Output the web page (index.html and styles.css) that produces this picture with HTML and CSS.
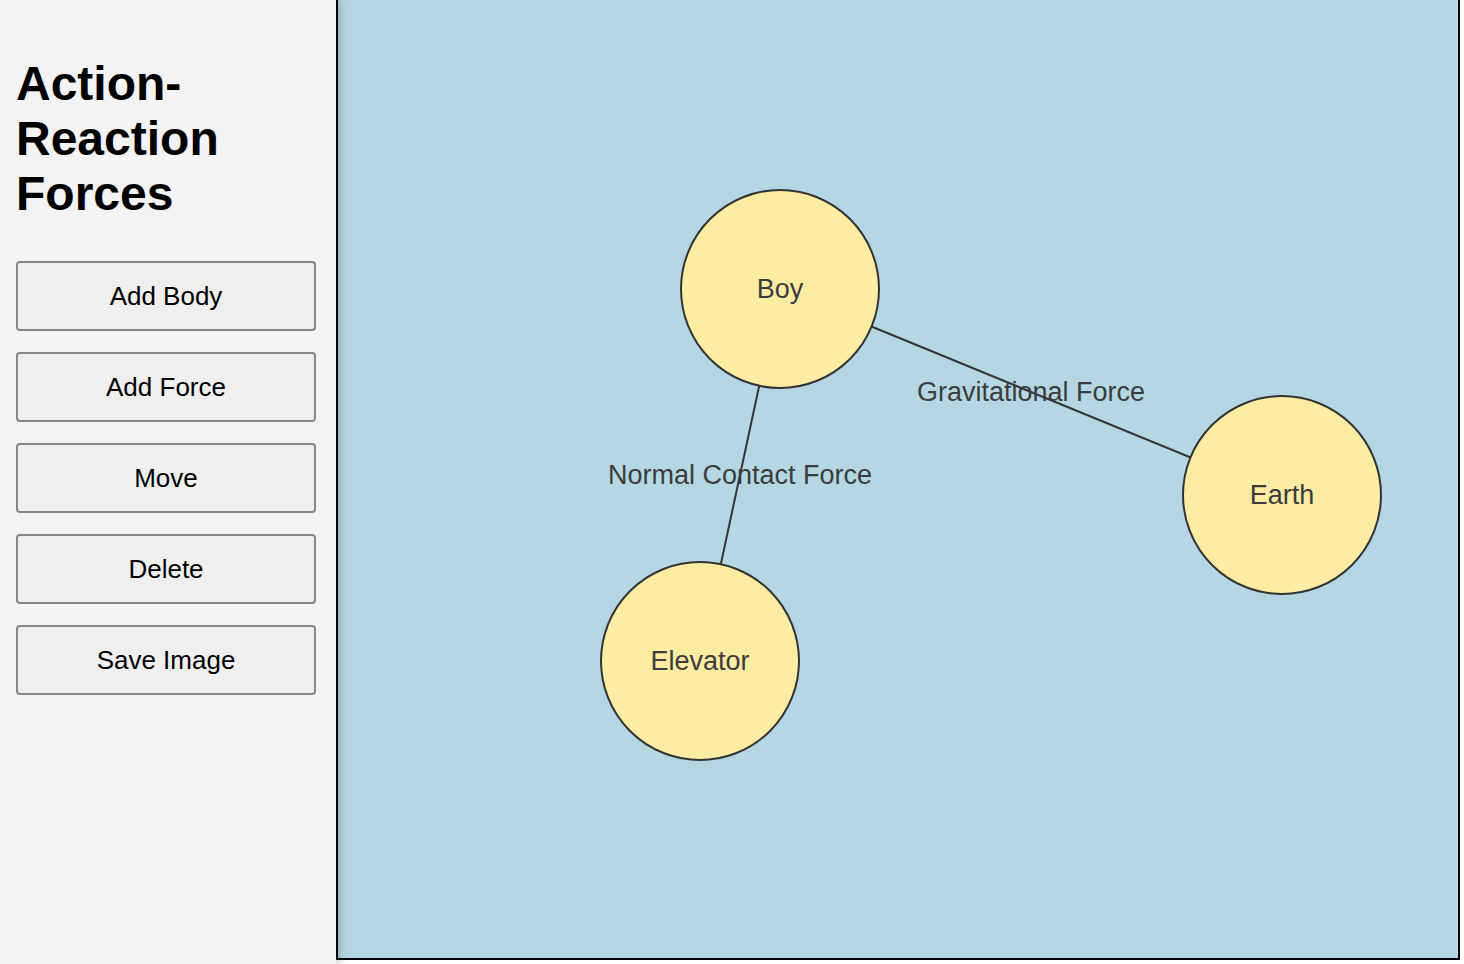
FILE: index.html
```html
<!DOCTYPE html>
<html lang="en">
<head>
    <meta charset="UTF-8">
    <meta name="viewport" content="width=device-width, initial-scale=1.0">
    <title>Action-Reaction Forces</title>
    <link rel="stylesheet" href="styles.css">
</head>
<body>
    <!-- Tool panel -->
    <div class="sidebar">
        <h1>Action-Reaction Forces</h1>
        <div class="tools">
            <button>Add Body</button>
            <button>Add Force</button>
            <button>Move</button>
            <button>Delete</button>
            <button>Save Image</button>
        </div>
    </div>

    <!-- Drawing area -->
    <div class="main">
        <div class="canvas">
            <svg class="board" xmlns="http://www.w3.org/2000/svg">
                <!-- forces -->
                <line class="force" x1="442" y1="289" x2="944" y2="495"/>
                <line class="force" x1="442" y1="289" x2="362" y2="661"/>
                <text class="force-label" x="693" y="394">Gravitational Force</text>
                <text class="force-label" x="402" y="477">Normal Contact Force</text>

                <!-- bodies -->
                <circle class="body" cx="442" cy="289" r="99"/>
                <text class="body-label" x="442" y="291">Boy</text>

                <circle class="body" cx="944" cy="495" r="99"/>
                <text class="body-label" x="944" y="497">Earth</text>

                <circle class="body" cx="362" cy="661" r="99"/>
                <text class="body-label" x="362" y="663">Elevator</text>
            </svg>
        </div>
    </div>
</body>
</html>
```

FILE: styles.css
```css
html, body {
    height: 100%;
}

body {
    font-family: "Liberation Sans", Arial, sans-serif;
    margin: 0;
    display: flex;
    overflow: hidden;
    background-color: #fff;
}

.sidebar {
    width: 336px;
    flex-shrink: 0;
    box-sizing: border-box;
    padding: 16px;
    background-color: #f3f3f3;
    box-shadow: 2px 0 10px rgba(0, 0, 0, 0.3);
    position: relative;
    z-index: 1;
}

.sidebar h1 {
    font-size: 48px;
    line-height: 55px;
    font-weight: bold;
    color: #000;
    margin: 40px 0 40px 0;
}

.tools {
    display: flex;
    flex-direction: column;
    gap: 21px;
}

.tools button {
    width: 300px;
    height: 70px;
    font-family: "Liberation Sans", Arial, sans-serif;
    font-size: 26px;
    color: #000;
    background-color: #efefef;
    border: 2px solid #868686;
    border-radius: 4px;
    cursor: pointer;
}

.tools button:hover {
    background-color: #e5e5e5;
}

.main {
    flex: 1;
    padding: 0 4px 4px 0;
}

.canvas {
    height: 100%;
    box-sizing: border-box;
    border: 2px solid #000;
    border-top: none;
    background-color: #b4d7e3;
}

.board {
    display: block;
    width: 100%;
    height: 100%;
}

.force {
    stroke: #333;
    stroke-width: 2;
}

.body {
    fill: #feeca2;
    stroke: #333;
    stroke-width: 2;
}

.force-label,
.body-label {
    font-family: "Liberation Sans", Arial, sans-serif;
    font-size: 27px;
    fill: #3c3c3c;
    text-anchor: middle;
    dominant-baseline: middle;
}
```
